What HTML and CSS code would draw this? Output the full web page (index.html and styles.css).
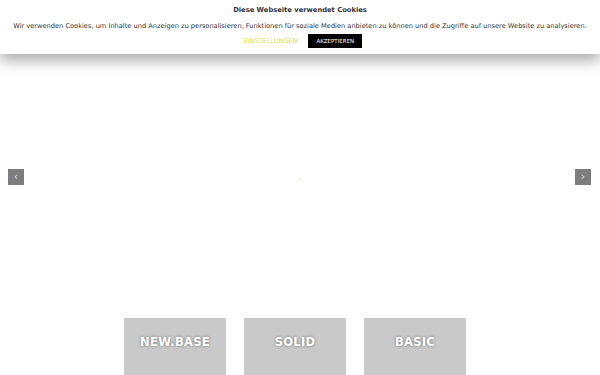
FILE: index.html
```html
<!DOCTYPE html>
<html lang="de">
<head>
  <meta charset="UTF-8">
  <title>Startseite</title>
  <meta name="viewport" content="width=device-width, initial-scale=1.0" />
  <link rel="stylesheet" href="styles.css">
</head>
<body>
  <div class="cookie-bar">
    <div class="cookie-titel">Diese Webseite verwendet Cookies</div>
    <p class="cookie-text">Wir verwenden Cookies, um Inhalte und Anzeigen zu personalisieren, Funktionen für soziale Medien anbieten zu können und die Zugriffe auf unsere Website zu analysieren.</p>
    <div class="cookie-buttons">
      <a class="btn-einstellungen" href="#">EINSTELLUNGEN</a>
      <a class="btn-akzeptieren" href="#">AKZEPTIEREN</a>
    </div>
  </div>

  <div class="slider">
    <button class="pfeil" aria-label="zurück">&lsaquo;</button>
    <span class="lader"></span>
    <button class="pfeil" aria-label="weiter">&rsaquo;</button>
  </div>

  <div class="produkte">
    <div class="kachel"><span>NEW.BASE</span></div>
    <div class="kachel"><span>SOLID</span></div>
    <div class="kachel"><span>BASIC</span></div>
  </div>
</body>
</html>
```

FILE: styles.css
```css
body {
  margin: 0;
  background: #fff;
  font-family: "DejaVu Sans", Verdana, sans-serif;
  color: #333;
  overflow: hidden;
}

.cookie-bar {
  position: relative;
  z-index: 2;
  height: 54px;
  box-sizing: border-box;
  padding-top: 6px;
  text-align: center;
  background: #fff;
  box-shadow: 0 6px 14px rgba(0, 0, 0, 0.35);
}

.cookie-titel {
  font-size: 6.75px;
  font-weight: bold;
  line-height: 9px;
}

.cookie-text {
  margin: 7px 0 0;
  font-size: 6.65px;
  line-height: 9px;
  white-space: nowrap;
}

.cookie-buttons {
  display: flex;
  justify-content: center;
  align-items: center;
  gap: 11px;
  margin-top: 3px;
  padding-left: 6px;
}

.cookie-buttons a {
  text-decoration: none;
  font-size: 6.5px;
}

.btn-einstellungen {
  color: #dce23a;
}

.btn-akzeptieren {
  background: #000;
  color: #fff;
  padding: 3px 8px;
  line-height: 8px;
  font-size: 5.5px !important;
}

.slider {
  height: 246px;
  display: flex;
  align-items: center;
  justify-content: space-between;
  padding: 0 9px 0 8px;
}

.pfeil {
  width: 16px;
  height: 16px;
  padding: 0;
  border: none;
  background: #7d7d7d;
  color: #ddd;
  font-size: 11px;
  line-height: 14px;
  font-family: "DejaVu Sans", sans-serif;
}

.lader {
  width: 2px;
  height: 2px;
  margin-top: 4px;
  background: #f3f3c8;
}

.produkte {
  display: flex;
  justify-content: center;
  gap: 18px;
  margin-top: 18px;
  margin-right: 10px;
}

.kachel {
  width: 102px;
  height: 57px;
  background: #c9c9c9;
  text-align: center;
  padding-top: 13px;
  box-sizing: border-box;
}

.kachel span {
  color: #fff;
  font-weight: bold;
  font-size: 11.5px;
  letter-spacing: 0.3px;
  text-shadow: 0 0 3px rgba(0, 0, 0, 0.45);
}
```
